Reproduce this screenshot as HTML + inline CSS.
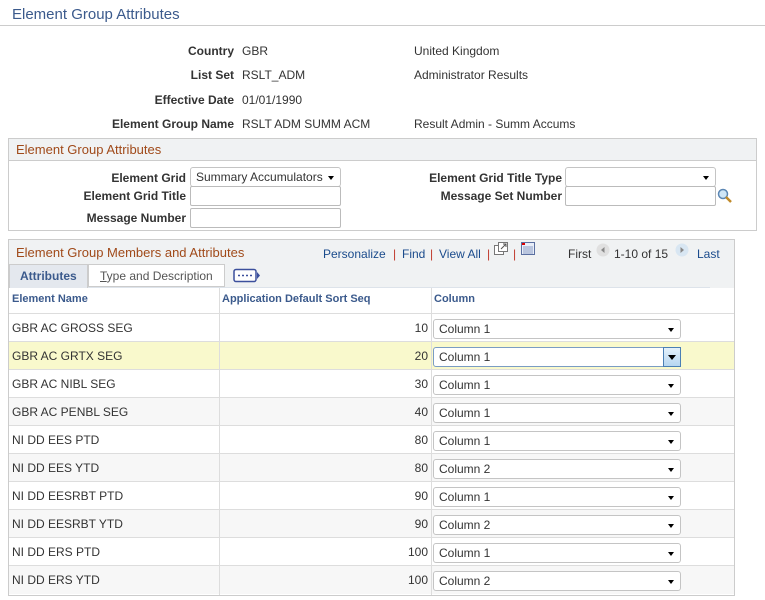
<!DOCTYPE html>
<html><head><style>
*{margin:0;padding:0;box-sizing:border-box}
body{width:765px;height:600px;background:#fff;font-family:"Liberation Sans",Arial,sans-serif;font-size:12px;color:#333;position:relative;overflow:hidden}
.a{position:absolute;white-space:nowrap}
.b{font-weight:bold;color:#333}
.r{text-align:right}
.inp{position:absolute;height:20px;border:1px solid #bbb;background:#fff;border-radius:2px}
.sel{position:absolute;height:20px;border:1px solid #c4c4c4;background:#fff;border-radius:3px;padding:2px 5px;white-space:nowrap;overflow:hidden}
.sel:after{content:"";position:absolute;right:6px;top:8px;border-left:3.5px solid transparent;border-right:3.5px solid transparent;border-top:4px solid #000}
.lnk{color:#1a4b8c}
.row{position:absolute;left:9px;width:725px;height:28px;border-bottom:1px solid #ddd}
</style></head><body>
<div class="a" style="left:12px;top:6px;font-size:15px;color:#3b5a8c">Element Group Attributes</div>
<div class="a" style="left:0;top:25px;width:765px;height:1px;background:#ccc"></div>

<div class="a b r" style="left:100px;width:134px;top:44px">Country</div><div class="a" style="left:242px;top:44px">GBR</div><div class="a" style="left:414px;top:44px">United Kingdom</div>
<div class="a b r" style="left:100px;width:134px;top:68px">List Set</div><div class="a" style="left:242px;top:68px">RSLT_ADM</div><div class="a" style="left:414px;top:68px">Administrator Results</div>
<div class="a b r" style="left:100px;width:134px;top:93px">Effective Date</div><div class="a" style="left:242px;top:93px">01/01/1990</div>
<div class="a b r" style="left:100px;width:134px;top:117px">Element Group Name</div><div class="a" style="left:242px;top:117px">RSLT ADM SUMM ACM</div><div class="a" style="left:414px;top:117px">Result Admin - Summ Accums</div>

<div class="a" style="left:8px;top:138px;width:749px;height:93px;border:1px solid #ccc"></div>
<div class="a" style="left:9px;top:139px;width:747px;height:22px;background:#f0f2f3;border-bottom:1px solid #ccc"></div>
<div class="a" style="left:16px;top:142px;font-size:13px;color:#a04a1a">Element Group Attributes</div>
<div class="a b r" style="left:60px;width:126px;top:171px">Element Grid</div>
<div class="sel" style="left:190px;top:167px;width:151px;padding-right:18px">Summary Accumulators</div>
<div class="a b r" style="left:60px;width:126px;top:189px">Element Grid Title</div>
<div class="inp" style="left:190px;top:186px;width:151px"></div>
<div class="a b r" style="left:60px;width:126px;top:211px">Message Number</div>
<div class="inp" style="left:190px;top:208px;width:151px"></div>
<div class="a b r" style="left:400px;width:162px;top:171px">Element Grid Title Type</div>
<div class="sel" style="left:565px;top:167px;width:151px"></div>
<div class="a b r" style="left:400px;width:162px;top:189px">Message Set Number</div>
<div class="inp" style="left:565px;top:186px;width:151px"></div>
<svg class="a" style="left:717px;top:188px" width="16" height="16"><circle cx="6" cy="6" r="4.5" fill="#cfe6f7" stroke="#5b86b3" stroke-width="1.5"/><path d="M9 9l5 5" stroke="#c08a2a" stroke-width="2.5"/></svg>

<div class="a" style="left:8px;top:239px;width:727px;height:357px;border:1px solid #ccc"></div>
<div class="a" style="left:9px;top:240px;width:725px;height:48px;background:#f0f2f3"></div>
<div class="a" style="left:16px;top:245px;font-size:13px;color:#a04a1a">Element Group Members and Attributes</div>
<div class="a lnk" style="left:323px;top:247px">Personalize</div>
<div class="a" style="left:393px;top:247px;color:#c0392b">|</div>
<div class="a lnk" style="left:402px;top:247px">Find</div>
<div class="a" style="left:430px;top:247px;color:#c0392b">|</div>
<div class="a lnk" style="left:439px;top:247px">View All</div>
<div class="a" style="left:487px;top:247px;color:#c0392b">|</div>
<svg class="a" style="left:494px;top:242px" width="14" height="13"><rect x="0.5" y="3.5" width="9" height="9" fill="#fff" stroke="#777"/><rect x="4.5" y="0.5" width="9" height="9" fill="#fff" stroke="#777"/><path d="M7 7l5-5M9 2h3v3" stroke="#555" fill="none"/></svg>
<div class="a" style="left:513px;top:247px;color:#c0392b">|</div>
<svg class="a" style="left:521px;top:242px" width="14" height="13"><rect x="0.5" y="0.5" width="13" height="12" fill="#e8eef8" stroke="#5a6fa0"/><rect x="1" y="1" width="3" height="2" fill="#d00"/><path d="M2 5h10M2 7h10M2 9h10M2 11h10" stroke="#8a9cc4"/></svg>
<div class="a" style="left:568px;top:247px;color:#333">First</div>
<svg class="a" style="left:596px;top:243px" width="14" height="14"><circle cx="7" cy="7" r="6.5" fill="#e0e0e0"/><path d="M8.5 4v6L5 7z" fill="#888"/></svg>
<div class="a" style="left:614px;top:247px">1-10 of 15</div>
<svg class="a" style="left:675px;top:243px" width="14" height="14"><circle cx="7" cy="7" r="6.5" fill="#d8e6f2"/><path d="M5.5 4v6L9 7z" fill="#888"/></svg>
<div class="a lnk" style="left:697px;top:247px">Last</div>

<div class="a" style="left:9px;top:264px;width:79px;height:24px;background:#e4e8ee;border:1px solid #ccc;border-bottom:none"></div>
<div class="a b" style="left:20px;top:269px;color:#3b5a8c">Attributes</div>
<div class="a" style="left:88px;top:264px;width:137px;height:23px;background:#fff;border:1px solid #ccc"></div>
<div class="a" style="left:100px;top:269px;color:#555"><u>T</u>ype and Description</div>
<svg class="a" style="left:233px;top:268px" width="28" height="16"><rect x="1" y="1.5" width="22" height="12" rx="2" fill="#fff" stroke="#3b4f9c" stroke-width="1.5"/><path d="M5 7.5h2M9 7.5h2M13 7.5h2M17 7.5h2" stroke="#3b4f9c" stroke-width="1.5"/><path d="M24 4v7l3-3.5z" fill="#3b4f9c"/></svg>
<div class="a" style="left:88px;top:287px;width:622px;height:1px;background:#dde3ea"></div>

<div class="a" style="left:9px;top:288px;width:725px;height:26px;background:#fff;border-bottom:1px solid #ddd"></div>
<div class="a b" style="left:12px;top:293px;font-size:11px;color:#3b5a8c">Element Name</div>
<div class="a b" style="left:222px;top:293px;font-size:11px;color:#3b5a8c">Application Default Sort Seq</div>
<div class="a b" style="left:434px;top:293px;font-size:11px;color:#3b5a8c">Column</div>

<div class="row" style="top:314px;background:#fff"></div>
<div class="row" style="top:342px;background:#f9f9cc"></div>
<div class="row" style="top:370px;background:#fff"></div>
<div class="row" style="top:398px;background:#f7f7f7"></div>
<div class="row" style="top:426px;background:#fff"></div>
<div class="row" style="top:454px;background:#f7f7f7"></div>
<div class="row" style="top:482px;background:#fff"></div>
<div class="row" style="top:510px;background:#f7f7f7"></div>
<div class="row" style="top:538px;background:#fff"></div>
<div class="row" style="top:566px;background:#f7f7f7;border-bottom:none"></div>
<div class="a" style="left:219px;top:288px;width:1px;height:307px;background:#ddd"></div>
<div class="a" style="left:431px;top:288px;width:1px;height:307px;background:#ddd"></div>

<div class="a" style="left:12px;top:321px">GBR AC GROSS SEG</div><div class="a r" style="left:380px;width:48px;top:321px">10</div><div class="sel" style="left:433px;top:319px;width:248px">Column 1</div>
<div class="a" style="left:12px;top:349px">GBR AC GRTX SEG</div><div class="a r" style="left:380px;width:48px;top:349px">20</div><div class="sel" style="left:433px;top:347px;width:248px;border-color:#7a9cc4">Column 1</div>
<div class="a" style="left:663px;top:347px;width:18px;height:20px;background:linear-gradient(#e4f1fb,#b6d6f1);border:1px solid #4a7fb5"></div>
<div class="a" style="left:668px;top:355px;border-left:4px solid transparent;border-right:4px solid transparent;border-top:5px solid #000"></div>
<div class="a" style="left:12px;top:377px">GBR AC NIBL SEG</div><div class="a r" style="left:380px;width:48px;top:377px">30</div><div class="sel" style="left:433px;top:375px;width:248px">Column 1</div>
<div class="a" style="left:12px;top:405px">GBR AC PENBL SEG</div><div class="a r" style="left:380px;width:48px;top:405px">40</div><div class="sel" style="left:433px;top:403px;width:248px">Column 1</div>
<div class="a" style="left:12px;top:433px">NI DD EES PTD</div><div class="a r" style="left:380px;width:48px;top:433px">80</div><div class="sel" style="left:433px;top:431px;width:248px">Column 1</div>
<div class="a" style="left:12px;top:461px">NI DD EES YTD</div><div class="a r" style="left:380px;width:48px;top:461px">80</div><div class="sel" style="left:433px;top:459px;width:248px">Column 2</div>
<div class="a" style="left:12px;top:489px">NI DD EESRBT PTD</div><div class="a r" style="left:380px;width:48px;top:489px">90</div><div class="sel" style="left:433px;top:487px;width:248px">Column 1</div>
<div class="a" style="left:12px;top:517px">NI DD EESRBT YTD</div><div class="a r" style="left:380px;width:48px;top:517px">90</div><div class="sel" style="left:433px;top:515px;width:248px">Column 2</div>
<div class="a" style="left:12px;top:545px">NI DD ERS PTD</div><div class="a r" style="left:380px;width:48px;top:545px">100</div><div class="sel" style="left:433px;top:543px;width:248px">Column 1</div>
<div class="a" style="left:12px;top:573px">NI DD ERS YTD</div><div class="a r" style="left:380px;width:48px;top:573px">100</div><div class="sel" style="left:433px;top:571px;width:248px">Column 2</div>
</body></html>
